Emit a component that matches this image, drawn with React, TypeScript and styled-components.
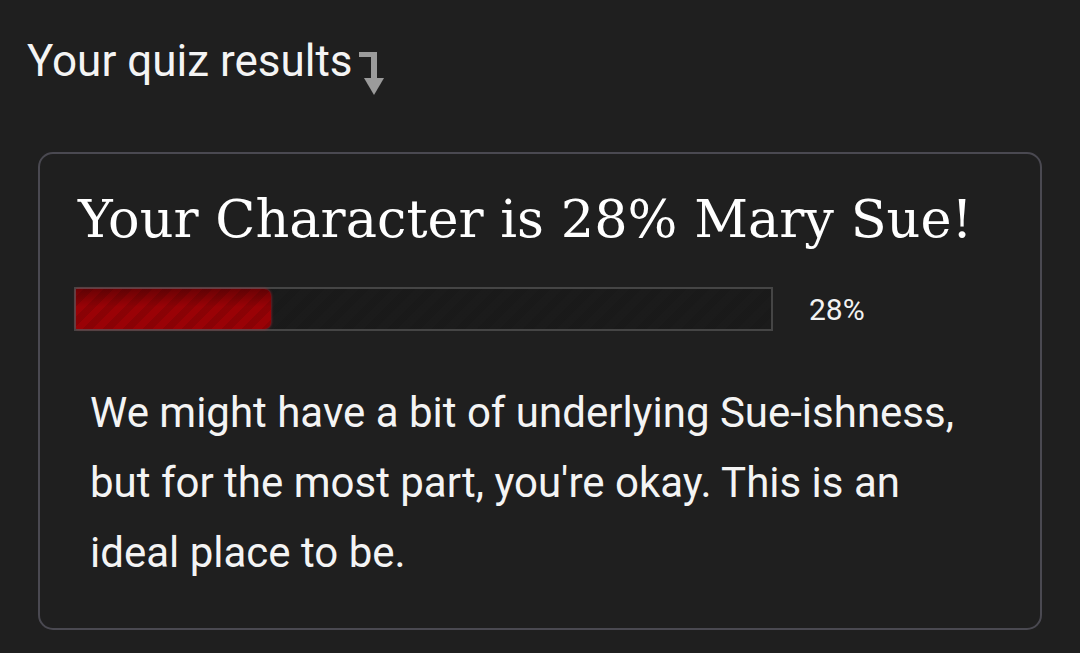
import styled, { createGlobalStyle } from "styled-components";

const GlobalStyle = createGlobalStyle`
  html, body {
    margin: 0;
    padding: 0;
    background: #1f1f1f;
  }
  body {
    font-family: Roboto, "Liberation Sans", sans-serif;
    color: #ffffff;
  }
`;

const Page = styled.div`
  padding: 34px 38px 24px 38px;
  display: flex;
  flex-direction: column;
`;

const PageTitle = styled.div`
  display: flex;
  align-items: flex-start;
  margin-left: -11px;
  font-size: 44px;
  line-height: 54px;
  height: 52px;
  color: #f4f4f4;
`;

const ArrowIcon = styled.svg`
  margin-left: 5px;
  margin-top: 18px;
  flex: none;
`;

const Card = styled.div`
  margin-top: 66px;
  width: 1004px;
  box-sizing: border-box;
  border: 2px solid #4a4951;
  border-radius: 15px;
  padding: 25px 34px 40px 34px;
`;

const Heading = styled.h1`
  margin: 0 0 0 4px;
  font-family: "DejaVu Serif", "Liberation Serif", serif;
  font-weight: normal;
  font-size: 52.5px;
  line-height: 80px;
  color: #ffffff;
`;

const BarRow = styled.div`
  display: flex;
  align-items: center;
  gap: 36px;
  margin-top: 28px;
`;

const Track = styled.div`
  width: 699px;
  height: 44px;
  box-sizing: border-box;
  border: 2px solid #454545;
  background:
    repeating-linear-gradient(
      -45deg,
      rgba(255, 255, 255, 0.005) 0 8px,
      rgba(0, 0, 0, 0.02) 8px 16px
    ),
    #1a1a1a;
  display: flex;
`;

const Fill = styled.div`
  height: 100%;
  border-radius: 0 7px 7px 0;
  background:
    linear-gradient(180deg, rgba(0, 0, 0, 0.3) 0%, rgba(0, 0, 0, 0) 45%),
    repeating-linear-gradient(
      -45deg,
      rgba(0, 0, 0, 0.1) 0 7px,
      rgba(255, 255, 255, 0) 7px 14px
    ),
    #9a0206;
  box-shadow: 0 0 3px rgba(210, 40, 60, 0.8);
`;

const Percent = styled.span`
  font-size: 30px;
  color: #f2f2f2;
`;

const Body = styled.p`
  margin: 47px 30px 0 16px;
  font-size: 42px;
  line-height: 70px;
  color: #f4f4f4;
`;

export default function App() {
  const value = 28;
  return (
    <>
      <GlobalStyle />
      <Page>
        <PageTitle>
          Your quiz results
          <ArrowIcon width="26" height="44" viewBox="0 0 26 44">
            <path d="M1 2H16V26" fill="none" stroke="#9b9b9b" strokeWidth="6" />
            <polygon points="6,26 26,26 16,43" fill="#9b9b9b" />
          </ArrowIcon>
        </PageTitle>
        <Card>
          <Heading>Your Character is {value}% Mary Sue!</Heading>
          <BarRow>
            <Track>
              <Fill style={{ width: `${value}%` }} />
            </Track>
            <Percent>{value}%</Percent>
          </BarRow>
          <Body>
            We might have a bit of underlying Sue-ishness, but for the most part, you're okay. This is an
            ideal place to be.
          </Body>
        </Card>
      </Page>
    </>
  );
}
